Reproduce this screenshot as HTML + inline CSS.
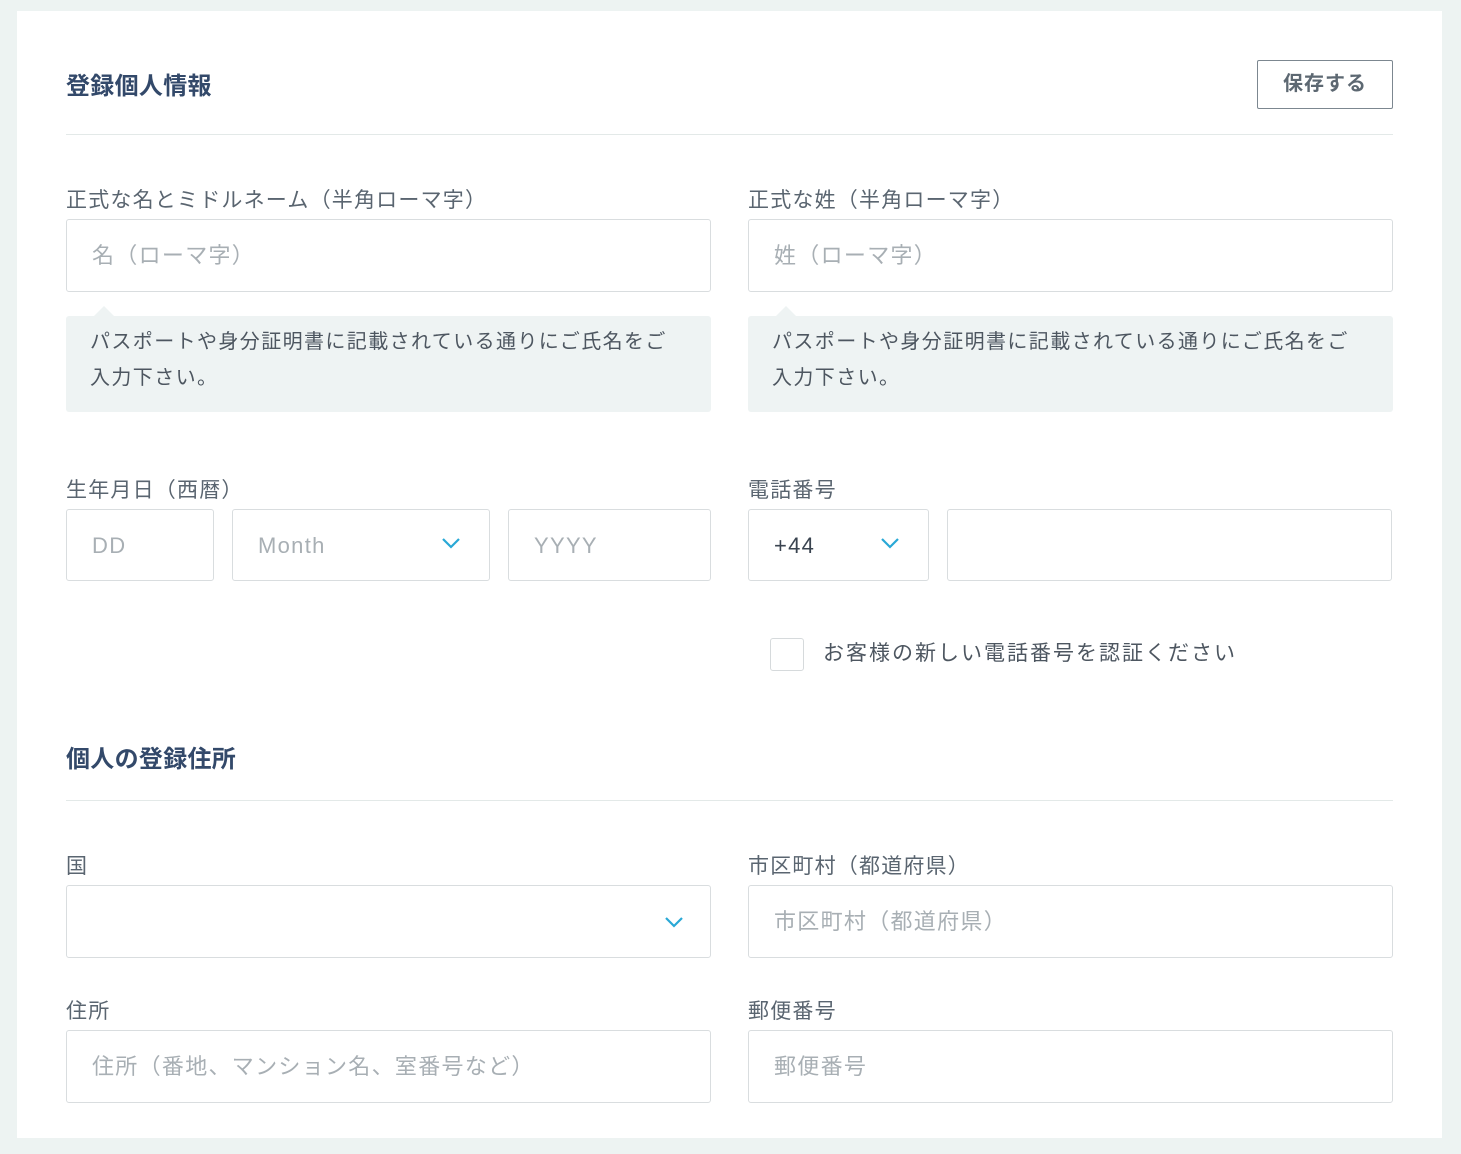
<!DOCTYPE html>
<html><head><meta charset="utf-8"><style>
*{box-sizing:border-box;margin:0;padding:0}
body{width:1461px;height:1154px;background:#edf3f2;font-family:"Liberation Sans","Noto Sans CJK JP",sans-serif;position:relative;overflow:hidden}
.card{position:absolute;left:17px;top:11px;width:1425px;height:1127px;background:#fff}
.a{position:absolute}
.h{color:#33496a;font-weight:bold;font-size:24px;letter-spacing:0.3px}
.hr{position:absolute;height:1px;background:#e3e9e8}
.lb{color:#5a6570;font-size:21px;letter-spacing:1.2px}
.in{position:absolute;border:1px solid #d9dddf;border-radius:3px;background:#fff;height:73px;font-size:22px;color:#a8afb4;padding-left:25px;line-height:71px;letter-spacing:1.3px}
.tip{position:absolute;background:#eef3f3;border-radius:3px;color:#4d5660;font-size:20px;line-height:36px;padding:8px 24px;letter-spacing:1.4px}
.tip:before{content:"";position:absolute;left:28px;top:-10px;border:10px solid transparent;border-top:0;border-bottom-color:#eef3f3}
.chev{position:absolute;top:27px;width:20px;height:12px}
</style></head><body>
<div class="card"></div>
<div class="a h" style="left:66px;top:66px">登録個人情報</div>
<div class="a" style="left:1257px;top:60px;width:136px;height:49px;border:1px solid #7c8790;border-radius:2px;color:#5d6872;font-size:20px;font-weight:bold;text-align:center;line-height:46px;letter-spacing:1px">保存する</div>
<div class="hr" style="left:66px;top:134px;width:1327px"></div>

<div class="a lb" style="left:66px;top:184px">正式な名とミドルネーム（半角ローマ字）</div>
<div class="a lb" style="left:748px;top:184px">正式な姓（半角ローマ字）</div>
<div class="in" style="left:66px;top:219px;width:645px">名（ローマ字）</div>
<div class="in" style="left:748px;top:219px;width:645px">姓（ローマ字）</div>
<div class="tip" style="left:66px;top:316px;width:645px;height:96px">パスポートや身分証明書に記載されている通りにご氏名をご入力下さい。</div>
<div class="tip" style="left:748px;top:316px;width:645px;height:96px">パスポートや身分証明書に記載されている通りにご氏名をご入力下さい。</div>

<div class="a lb" style="left:66px;top:474px">生年月日（西暦）</div>
<div class="a lb" style="left:748px;top:474px">電話番号</div>
<div class="in" style="left:66px;top:509px;width:148px;height:72px">DD</div>
<div class="in" style="left:232px;top:509px;width:258px;height:72px">Month<svg class="chev" style="left:208px" viewBox="0 0 20 12"><path d="M2 2l8 8 8-8" fill="none" stroke="#29a8d6" stroke-width="2.2"/></svg></div>
<div class="in" style="left:508px;top:509px;width:203px;height:72px">YYYY</div>
<div class="in" style="left:748px;top:509px;width:181px;height:72px;color:#3a4450">+44<svg class="chev" style="left:131px" viewBox="0 0 20 12"><path d="M2 2l8 8 8-8" fill="none" stroke="#29a8d6" stroke-width="2.2"/></svg></div>
<div class="in" style="left:947px;top:509px;width:445px;height:72px"></div>
<div class="a" style="left:770px;top:638px;width:34px;height:33px;border:1px solid #d6dadc;border-radius:3px"></div>
<div class="a" style="left:823px;top:637px;font-size:21px;color:#4d5660;letter-spacing:2px">お客様の新しい電話番号を認証ください</div>

<div class="a h" style="left:66px;top:739px">個人の登録住所</div>
<div class="hr" style="left:66px;top:800px;width:1327px"></div>

<div class="a lb" style="left:66px;top:850px">国</div>
<div class="a lb" style="left:748px;top:850px">市区町村（都道府県）</div>
<div class="in" style="left:66px;top:885px;width:645px"><svg class="chev" style="left:597px;top:30px" viewBox="0 0 20 12"><path d="M2 2l8 8 8-8" fill="none" stroke="#29a8d6" stroke-width="2.2"/></svg></div>
<div class="in" style="left:748px;top:885px;width:645px">市区町村（都道府県）</div>

<div class="a lb" style="left:66px;top:995px">住所</div>
<div class="a lb" style="left:748px;top:995px">郵便番号</div>
<div class="in" style="left:66px;top:1030px;width:645px">住所（番地、マンション名、室番号など）</div>
<div class="in" style="left:748px;top:1030px;width:645px">郵便番号</div>
</body></html>
